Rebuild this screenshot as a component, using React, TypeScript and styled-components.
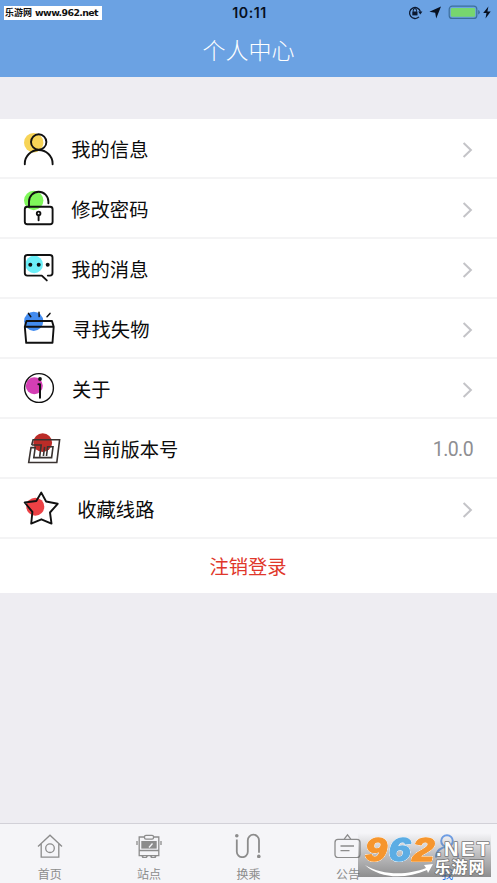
import React from "react";
import styled, { createGlobalStyle } from "styled-components";

const cjk = '"Noto Sans CJK SC", sans-serif';

const GlobalStyle = createGlobalStyle`
  * { box-sizing: border-box; }
  body { margin: 0; background: #eeeef3; font-family: ${cjk}; }
`;

const Screen = styled.div`
  position: relative;
  display: flex;
  flex-direction: column;
  width: 497px;
  height: 883px;
  overflow: hidden;
  background: #eeedf2;
`;

const Header = styled.header`
  height: 77px;
  flex: none;
  background: #6ba2e3;
`;

const StatusBar = styled.div`
  display: grid;
  grid-template-columns: 1fr auto 1fr;
  align-items: center;
  height: 25px;
  padding: 0 5px 0 4px;
`;

const SiteTag = styled.span`
  justify-self: start;
  display: flex;
  align-items: center;
  gap: 3px;
  width: 98px;
  height: 14px;
  padding-left: 1px;
  background: #fff;
  color: #111;
  font: 700 9px/14px ${cjk};
  white-space: nowrap;
`;

const SiteUrl = styled.span`
  font: 700 9.4px/13px "DejaVu Sans", sans-serif;
  letter-spacing: -0.6px;
`;

const Clock = styled.span`
  color: #071020;
  font: 600 14.2px/16px Inter, sans-serif;
  letter-spacing: 0.5px;
  padding-left: 3px;
`;

const StatusIcons = styled.svg`
  justify-self: end;
  display: block;
  margin-top: -1px;
`;

const Title = styled.h1`
  margin: 0;
  color: #fff;
  text-align: center;
  font: 300 23px/48px ${cjk};
`;

const Menu = styled.main`
  margin-top: 42px;
  background: #fff;
`;

const Row = styled.div`
  display: flex;
  align-items: center;
  height: 60px;
  padding-right: 24px;
  border-bottom: 2px solid #f4f4f5;
`;

const IconSlot = styled.svg`
  flex: none;
  display: block;
  width: 62px;
  height: 60px;
  overflow: visible;
  margin-bottom: -2px;
`;

const Label = styled.span<{ $inset: number }>`
  flex: 1;
  margin-left: ${(p) => p.$inset}px;
  color: #0b0b0b;
  font: 400 19.3px/28px ${cjk};
  padding-top: 2px;
`;

const Version = styled.span`
  color: #8e8e92;
  font: 400 19.5px/28px Roboto, sans-serif;
  letter-spacing: -0.6px;
  padding-top: 4px;
`;

const Chevron = styled.svg`
  display: block;
  margin-top: 3px;
`;

const Logout = styled.button`
  display: block;
  width: 100%;
  height: 54px;
  padding: 0 1px 0 0;
  border: 0;
  background: #fff;
  color: #e0372b;
  font: 400 19.3px/54px ${cjk};
`;

const TabBar = styled.nav`
  display: grid;
  grid-template-columns: repeat(5, 1fr);
  height: 60px;
  margin-top: auto;
  border-top: 1px solid #d2d1d8;
  background: #f5f5f8;
`;

const Tab = styled.div<{ $active?: boolean }>`
  display: flex;
  flex-direction: column;
  align-items: center;
  color: ${(p) => (p.$active ? "#2473e6" : "#8c8c8c")};
  font: 400 12px/18px ${cjk};

  svg {
    display: block;
    margin: 8px 0 7px;
  }
`;

const Watermark = styled.svg`
  position: absolute;
  left: 358px;
  top: 833px;
  overflow: visible;
`;

const Digits = styled.g`
  font: italic 700 34px "Liberation Sans", sans-serif;
  stroke-width: 1.6;
  stroke-linejoin: round;
  filter: drop-shadow(0 0 0.7px #fff) drop-shadow(0 0 0.7px #fff) drop-shadow(0 0 0.5px #fff);
`;

const icons = {
  user: (
    <>
      <circle cx="33.7" cy="23.7" r="9.7" fill="#f7d457" />
      <circle cx="38.7" cy="23" r="7.7" />
      <path d="M24.8 45.2V44.5a13.9 13.5 0 0 1 27.8 0v.7" />
    </>
  ),
  lock: (
    <>
      <circle cx="33.7" cy="21.5" r="9.7" fill="#7ff75a" />
      <path d="M29 27.7V22.5a9.7 9.8 0 0 1 19.4 0v1.8" />
      <rect x="24.8" y="27.8" width="27.8" height="17.5" rx="2.5" />
      <circle cx="38.6" cy="34.4" r="1.8" />
      <path d="M38.6 36.5v4.8" />
    </>
  ),
  chat: (
    <>
      <circle cx="34.2" cy="25.4" r="8.8" fill="#6ceff8" />
      <path d="M47.8 36.6H50a2.5 2.5 0 0 0 2.5-2.5V18.5A2.5 2.5 0 0 0 50 16H27.3a2.5 2.5 0 0 0-2.5 2.5v15.6a2.5 2.5 0 0 0 2.5 2.5h14.5l5 4.8" />
      <g fill="#111" stroke="none">
        <circle cx="30.3" cy="25.7" r="2" />
        <circle cx="38.7" cy="25.7" r="2" />
        <circle cx="47.7" cy="25.7" r="2" />
      </g>
    </>
  ),
  box: (
    <>
      <circle cx="33.7" cy="22.3" r="9.6" fill="#438cf0" />
      <path d="M26.5 22H52l1.7 5.7-1.2 16.1H26.2L24.8 27.7zM24.8 27.7h28.9" />
      <path d="M28.4 14.4l2.4 3.3M39 13.3l.2 4.3M50 14.4l-3 3.3" strokeWidth="1.5" />
    </>
  ),
  info: (
    <>
      <circle cx="34.3" cy="26.7" r="8.5" fill="#d43eb4" />
      <circle cx="39" cy="29" r="14.4" strokeWidth="1.4" />
      <circle cx="40" cy="20" r="1.9" fill="#111" stroke="none" />
      <path d="M38.4 25.2H40v13.6" strokeWidth="2" />
    </>
  ),
  version: (
    <>
      <circle cx="42.7" cy="23.7" r="9.4" fill="#bb2c28" />
      <path
        d="M31.7 26l1.4-5.2H59.6L56.8 43.5H28.7L31 28.6h4.2L33.8 38.6H51.6L53 27.8H47.6L46.5 37M31.7 26H41.2L39.7 37.6M44.6 27.8L43.4 37"
        stroke="#3a3331"
        strokeWidth="1.6"
        strokeLinecap="butt"
        strokeLinejoin="miter"
      />
    </>
  ),
  star: (
    <>
      <circle cx="35.3" cy="27.7" r="9" fill="#ec4145" />
      <path d="M41.3 13.6l4.8 8.9 11.6 2.3-7.7 8.7 1.5 11.1-10.1-4.3-10.2 4.3 1.2-11.7-7.7-9.4 11.6-1.5z" />
    </>
  ),
};

type IconName = keyof typeof icons;

const items: { icon: IconName; label: string; inset: number; value?: string }[] = [
  { icon: "user", label: "我的信息", inset: 9.3 },
  { icon: "lock", label: "修改密码", inset: 9.3 },
  { icon: "chat", label: "我的消息", inset: 9.3 },
  { icon: "box", label: "寻找失物", inset: 10.3 },
  { icon: "info", label: "关于", inset: 10 },
  { icon: "version", label: "当前版本号", inset: 20, value: "1.0.0" },
  { icon: "star", label: "收藏线路", inset: 15.3 },
];

function TabIcon({ children }: { children: React.ReactNode }) {
  return (
    <svg width="30" height="26" viewBox="0 0 30 26" fill="none" stroke="currentColor" strokeWidth="1.3">
      {children}
    </svg>
  );
}

export default function App() {
  return (
    <Screen>
      <GlobalStyle />
      <Header>
        <StatusBar>
          <SiteTag>
            乐游网<SiteUrl>www.962.net</SiteUrl>
          </SiteTag>
          <Clock>10:11</Clock>
          <StatusIcons width="84" height="16" viewBox="0 0 84 16">
            <path d="M11 12.9A5.5 5.5 0 1 1 12.4 7.6" fill="none" stroke="#0c1930" strokeWidth="1.3" />
            <path d="M10.2 7.4h4.2l-2.1 3z" fill="#0c1930" />
            <rect x="4.3" y="7.5" width="5.2" height="3.9" fill="#0c1930" />
            <path d="M5.3 7.7V6.2a1.6 1.6 0 0 1 3.2 0v1.5" fill="none" stroke="#0c1930" />
            <path d="M33 2.5L28.2 14.5l-1-5.8-5.8-1z" fill="#071020" />
            <rect x="41.2" y="2.2" width="27.6" height="12.2" rx="3" fill="#6ba2e3" stroke="#3d6f9b" strokeWidth="1.2" />
            <rect x="42.8" y="3.9" width="24.4" height="8.9" rx="1.4" fill="#77d66f" />
            <path d="M70.2 6q1.6.4 1.6 2.2t-1.6 2.2z" fill="#3d6f9b" />
            <path d="M80.4 2.4l-5.2 6.7h3.3l-1 5.4 5.2-7h-3.3z" fill="#071020" />
          </StatusIcons>
        </StatusBar>
        <Title>个人中心</Title>
      </Header>

      <Menu>
        {items.map((item) => (
          <Row key={item.label}>
            <IconSlot
              viewBox="0 0 62 60"
              fill="none"
              stroke="#111"
              strokeWidth="1.9"
              strokeLinecap="round"
              strokeLinejoin="round"
            >
              {React.Children.map(icons[item.icon].props.children, (part, i) =>
                i === 0 ? <g stroke="none">{part}</g> : part
              )}
            </IconSlot>
            <Label $inset={item.inset}>{item.label}</Label>
            {item.value ? (
              <Version>{item.value}</Version>
            ) : (
              <Chevron width="12" height="18" viewBox="0 0 12 18">
                <path d="M2.6 2l7.3 7-7.3 7" fill="none" stroke="#c4c4c8" strokeWidth="2" />
              </Chevron>
            )}
          </Row>
        ))}
        <Logout>注销登录</Logout>
      </Menu>

      <TabBar>
        <Tab>
          <TabIcon>
            <path d="M3 14.5L15 3.2l12 11.3M6.2 12v13.2h17.6V12" />
            <circle cx="15" cy="16.2" r="4.3" />
          </TabIcon>
          首页
        </Tab>
        <Tab>
          <TabIcon>
            <path d="M10 5H5.2v18.7h19.6V5H20M5.2 18.5h19.6M3 9v4M27 9v4" />
            <rect x="10.5" y="3.4" width="9" height="3.8" rx="1.4" />
            <rect x="7.3" y="9" width="15.4" height="7.6" fill="currentColor" stroke="none" />
            <path d="M15 15.5l3.5-4" stroke="#f5f5f8" />
            <path d="M8.3 23.5a2.4 2.4 0 0 0 4.8 0M16.9 23.5a2.4 2.4 0 0 0 4.8 0" strokeWidth="1.6" />
          </TabIcon>
          站点
        </Tab>
        <Tab>
          <TabIcon>
            <path d="M3.8 7.5v12.2a5.5 5.5 0 0 0 11 0V8.3a5.6 5.6 0 0 1 11.2 0v12.5" strokeWidth="1.8" />
            <circle cx="3.8" cy="3.8" r="1.8" fill="currentColor" stroke="none" />
            <circle cx="25.8" cy="24.4" r="1.8" fill="currentColor" stroke="none" />
          </TabIcon>
          换乘
        </Tab>
        <Tab>
          <TabIcon>
            <rect x="2" y="7.4" width="25" height="18.2" rx="3" />
            <path d="M11.2 7.2l3.3-4.4 3.3 4.4M7.5 14h13.5M7.5 18.6h9" />
          </TabIcon>
          公告
        </Tab>
        <Tab $active>
          <TabIcon>
            <circle cx="15" cy="9" r="5.8" stroke="#6d9fea" strokeWidth="2" />
            <path d="M4 25.5c0-14 22-14 22 0" stroke="#6d9fea" strokeWidth="2" />
          </TabIcon>
          我
        </Tab>
      </TabBar>

      <Watermark width="133" height="44" viewBox="0 0 133 44">
        <defs>
          <linearGradient id="plate" x1="0" y1="0" x2="0" y2="1">
            <stop offset="0" stopColor="#777" stopOpacity="0" />
            <stop offset="0.5" stopColor="#666" stopOpacity="0.4" />
            <stop offset="1" stopColor="#555" stopOpacity="0.65" />
          </linearGradient>
        </defs>
        <rect width="133" height="44" fill="url(#plate)" />
        <Digits>
          <text x="7" y="27.5" fill="#f6962e" stroke="#f6962e" textLength="22" lengthAdjust="spacingAndGlyphs">9</text>
          <text x="30.5" y="27.5" fill="#5cade4" stroke="#5cade4" textLength="22" lengthAdjust="spacingAndGlyphs">6</text>
          <text x="54.5" y="27.5" fill="#f6962e" stroke="#f6962e" textLength="22" lengthAdjust="spacingAndGlyphs">2</text>
        </Digits>
        <path d="M7 32C25 43 51 42 68 35l-2-3 9-1-5 9-1-3C46 47 21 45 7 32z" fill="#fff" />
        <g fill="#fff" stroke="#777" strokeWidth="1.6" strokeLinejoin="round" paintOrder="stroke" fontWeight="700">
          <text x="78" y="22.5" fontFamily='"Liberation Sans", sans-serif' fontSize="20" textLength="53">.NET</text>
          <text x="76.5" y="40" fontFamily={cjk} fontSize="16" textLength="50">乐游网</text>
        </g>
      </Watermark>
    </Screen>
  );
}
